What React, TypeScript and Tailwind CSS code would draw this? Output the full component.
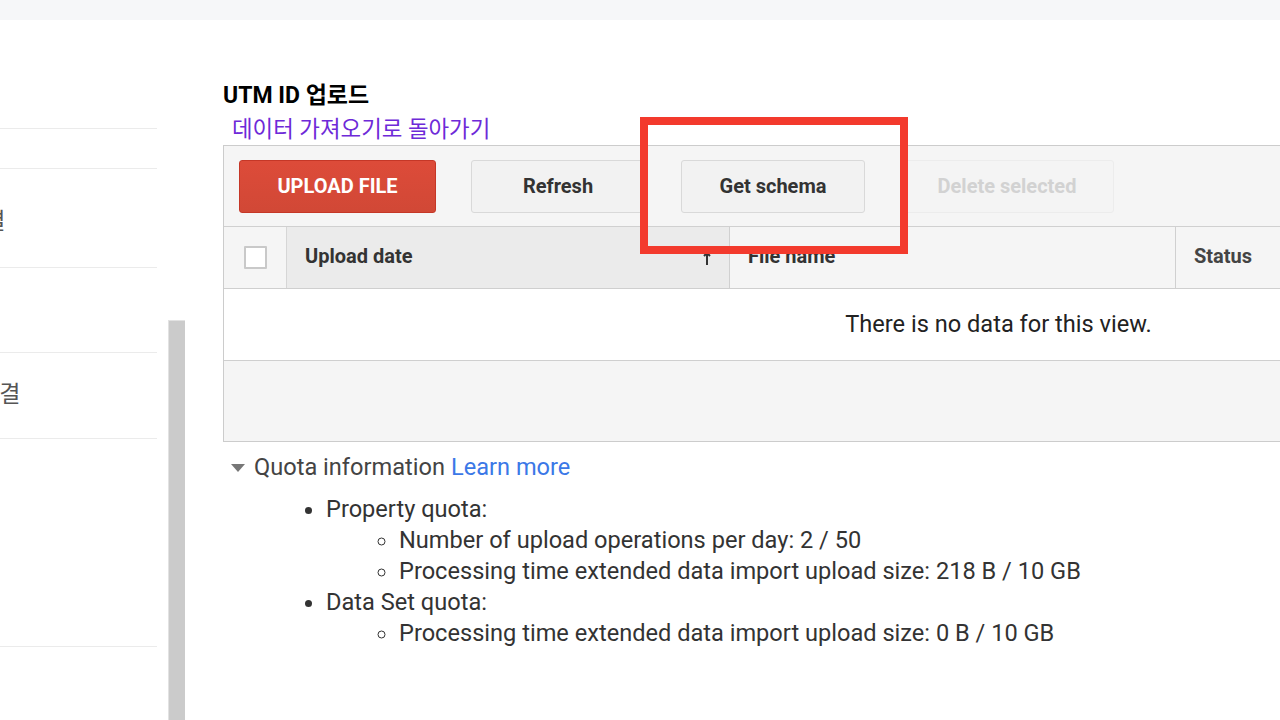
import clsx from "clsx";

const font = "font-['Roboto','Noto_Sans_CJK_KR',sans-serif]";

const sideItems = [
  { h: "h-[109px]", text: "" },
  { h: "h-[40px]", text: "" },
  { h: "h-[99px]", text: "연결", shift: "ml-[-37px] mt-[8px]" },
  { h: "h-[85px]", text: "" },
  { h: "h-[86px]", text: "연결", shift: "ml-[-22px]" },
  { h: "h-[208px]", text: "" },
];

function Sidebar() {
  return (
    <div className="w-[157px] shrink-0 overflow-hidden">
      {sideItems.map((item, i) => (
        <div
          key={i}
          className={clsx(item.h, "border-b border-[#ebebeb] flex items-center overflow-hidden")}
        >
          {item.text && (
            <span className={clsx(item.shift, "text-[23px] text-[#555] whitespace-nowrap")}>
              {item.text}
            </span>
          )}
        </div>
      ))}
    </div>
  );
}

function Toolbar() {
  return (
    <div className="h-[81px] bg-[#f5f5f5] border-b border-[#d0d0d0] flex items-center pl-[15px]">
      <button className="w-[197px] h-[53px] rounded-[3px] bg-gradient-to-b from-[#dd4b39] to-[#d14836] border border-[#c53727] text-white font-bold text-[20px]">
        UPLOAD FILE
      </button>
      <button className="ml-[35px] w-[174px] h-[53px] rounded-[3px] bg-[#f2f2f2] border border-[#d9d9d9] text-[#333] font-bold text-[20px]">
        Refresh
      </button>
      <button className="ml-[36px] w-[184px] h-[53px] rounded-[3px] bg-[#f2f2f2] border border-[#d9d9d9] text-[#333] font-bold text-[20px]">
        Get schema
      </button>
      <button className="ml-[35px] w-[214px] h-[53px] rounded-[3px] bg-[#f4f4f4] border border-[#ececec] text-[#d2d2d2] font-bold text-[20px]">
        Delete selected
      </button>
    </div>
  );
}

function HeaderRow() {
  return (
    <div className="h-[62px] flex border-b border-[#cfcfcf] bg-[#f5f5f5]">
      <div className="w-[63px] shrink-0 flex items-center justify-center border-r border-[#d6d6d6] bg-[#f5f5f5]">
        <div className="w-[23px] h-[23px] bg-white border-2 border-[#c9c9c9] rounded-[1px]" />
      </div>
      <div className="w-[443px] shrink-0 flex items-center justify-between bg-[#ebebeb] border-r border-[#d0d0d0] pl-[18px] pr-[18px]">
        <span className="font-bold text-[20px] text-[#333] mb-[3px]">Upload date</span>
        <svg width="8" height="14" viewBox="0 0 8 14" className="mt-[2px]">
          <path d="M4 1 V13 M1 4 L4 1 L7 4" stroke="#333" strokeWidth="2" fill="none" />
        </svg>
      </div>
      <div className="w-[446px] shrink-0 flex items-center border-r border-[#d0d0d0] pl-[18px]">
        <span className="font-bold text-[20px] text-[#333] mb-[3px]">File name</span>
      </div>
      <div className="flex-1 flex items-center pl-[18px]">
        <span className="font-bold text-[20px] text-[#444] mb-[3px]">Status</span>
      </div>
    </div>
  );
}

function DataTable() {
  return (
    <div className="w-[1550px] border border-[#cccccc] border-r-0">
      <Toolbar />
      <HeaderRow />
      <div className="h-[72px] bg-white border-b border-[#cfcfcf] flex items-center justify-center">
        <span className="text-[23.6px] text-[#222]">There is no data for this view.</span>
      </div>
      <div className="h-[80px] bg-[#f5f5f5]" />
    </div>
  );
}

function Quota() {
  return (
    <div className="mt-[10px] text-[23.6px] text-[#333]">
      <div className="flex items-center h-[31px] text-[#444]">
        <svg width="14" height="8" viewBox="0 0 14 8" className="ml-[8px] mr-[9px]">
          <path d="M0 0 H14 L7 8 Z" fill="#777" />
        </svg>
        <span>Quota information</span>
        <a className="ml-[6px] text-[#3b78e7]">Learn more</a>
      </div>
      <ul className="mt-[11px] pl-[103px] list-disc leading-[31px]">
        <li>
          Property quota:
          <ul className="pl-[73px] list-[circle]">
            <li>Number of upload operations per day: 2 / 50</li>
            <li>Processing time extended data import upload size: 218 B / 10 GB</li>
          </ul>
        </li>
        <li>
          Data Set quota:
          <ul className="pl-[73px] list-[circle]">
            <li>Processing time extended data import upload size: 0 B / 10 GB</li>
          </ul>
        </li>
      </ul>
    </div>
  );
}

export default function App() {
  return (
    <div className={clsx(font, "relative w-[1280px] h-[720px] overflow-hidden bg-white")}>
      <div className="h-[20px] bg-[#f6f7f9]" />
      <div className="flex h-[700px]">
        <Sidebar />
        <div className="ml-[11px] w-[17px] shrink-0 flex flex-col pt-[300px]">
          <div className="flex-1 bg-[#cbcbcb] border-l border-[#e2e2e2] border-t" />
        </div>
        <div className="ml-[38px] flex-1 overflow-hidden pt-[61px]">
          <h1 className="font-bold text-[23px] text-black leading-[30px]">UTM ID 업로드</h1>
          <a className="block ml-[9px] mt-[3px] text-[22.4px] text-[#6e2ad8] leading-[30px]">
            데이터 가져오기로 돌아가기
          </a>
          <div className="mt-[1px]">
            <DataTable />
          </div>
          <Quota />
        </div>
      </div>
      {/* annotation box */}
      <div className="absolute left-[640px] top-[117px] w-[268px] h-[137px] border-[8px] border-[#f33a2d]" />
    </div>
  );
}
